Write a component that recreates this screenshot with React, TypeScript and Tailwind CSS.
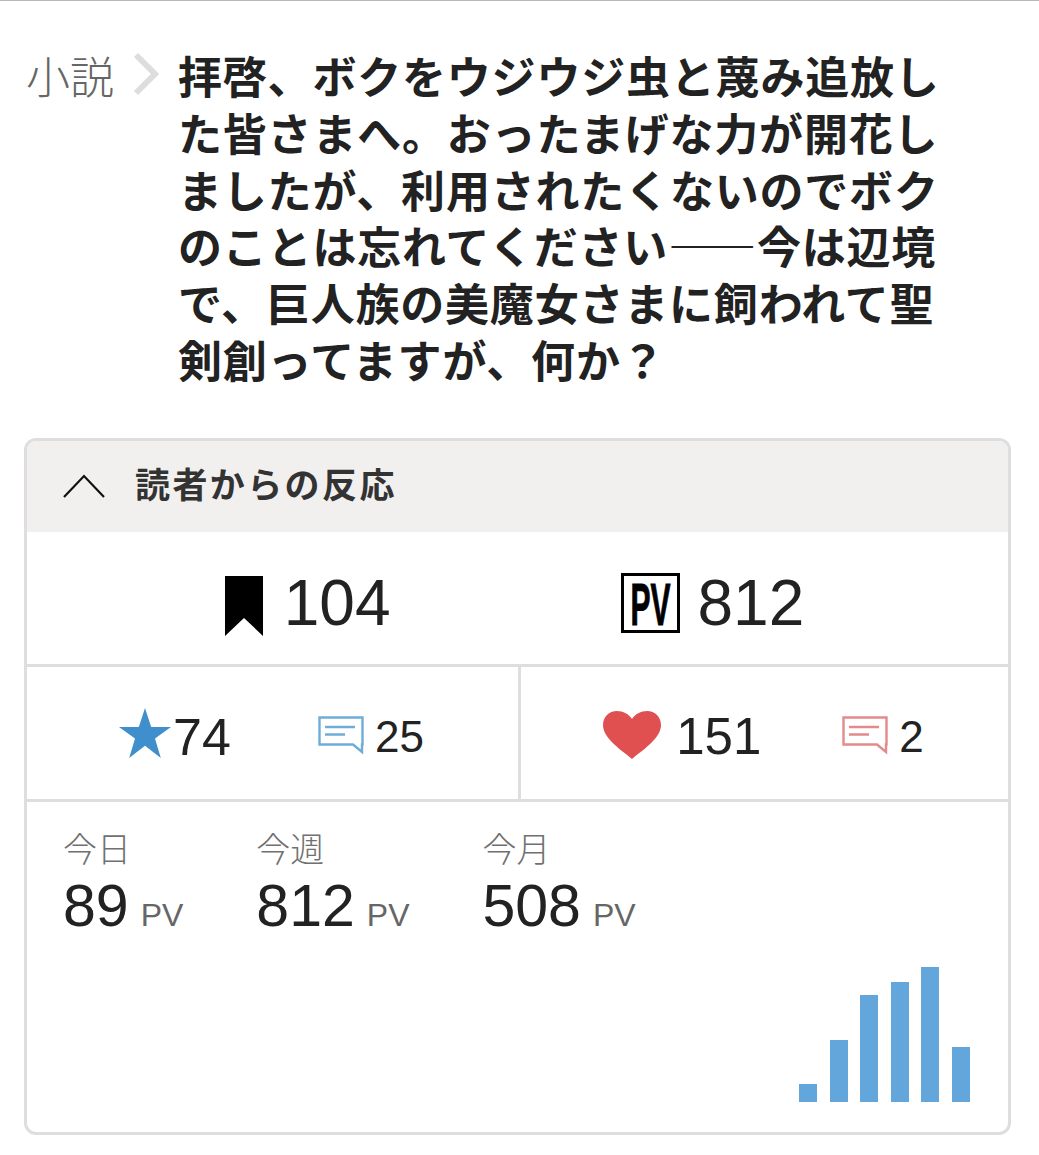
const sans = 'font-["Liberation_Sans","Noto_Sans_CJK_JP",sans-serif]';
const jp = 'font-["Noto_Sans_CJK_JP","Liberation_Sans",sans-serif]';

function CommentIcon({ color }: { color: string }) {
  return (
    <svg width="46" height="39" viewBox="0 0 46 39" fill="none" className="shrink-0 mt-[6px]">
      <path d="M1.5 1.5H44.5V28.5H44V36L35 28.5H1.5Z" stroke={color} strokeWidth="2.4" />
      <path d="M7 11H37M7 18.5H27" stroke={color} strokeWidth="2.4" />
    </svg>
  );
}

function Stat({ label, value }: { label: string; value: string }) {
  return (
    <div>
      <div className={`${jp} text-[34px] leading-[38px] text-[#707070] font-light`}>{label}</div>
      <div className="flex items-baseline mt-[7px]">
        <span className="text-[59px] leading-[64px] text-[#222]">{value}</span>
        <span className="text-[32px] text-[#666] ml-[12px]">PV</span>
      </div>
    </div>
  );
}

const bars = [18, 62, 107, 120, 135, 55];

export default function App() {
  return (
    <div className={`${sans} w-[1039px] h-[1155px] overflow-hidden bg-white border-t border-t-[#b8b8b8]`}>
      <div className="flex pt-[46px] pl-[26px] pr-[90px]">
        <div className={`${jp} flex items-start w-[152px] shrink-0 text-[#666] text-[44px] leading-[57px] font-light`}>
          <span>小説</span>
          <svg width="26" height="44" viewBox="0 0 26 44" fill="none" className="ml-[19px] mt-[5px]">
            <path d="M3 3L22 22L3 41" stroke="#dddddd" strokeWidth="6" />
          </svg>
        </div>
        <h1 className={`${jp} flex-1 text-[44px] leading-[56.8px] tracking-[0.8px] font-bold text-[#222] break-all`}>
          拝啓、ボクをウジウジ虫と蔑み追放した皆さまへ。おったまげな力が開花しましたが、利用されたくないのでボクのことは忘れてください――今は辺境で、巨人族の美魔女さまに飼われて聖剣創ってますが、何か？
        </h1>
      </div>

      <section className="ml-[24px] mt-[50px] w-[987px] h-[697px] border-[3px] border-[#dedede] rounded-[12px] overflow-hidden flex flex-col">
        <header className="h-[91px] shrink-0 bg-[#f1f0ef] flex items-center pl-[36px] pb-[6px]">
          <svg width="42" height="24" viewBox="0 0 42 24" fill="none" className="shrink-0 mt-[6px]">
            <path d="M1 23L21 2L41 23" stroke="#111" strokeWidth="2.2" />
          </svg>
          <h2 className={`${jp} ml-[30px] text-[35px] leading-[40px] tracking-[2.4px] font-semibold text-[#333]`}>読者からの反応</h2>
        </header>

        <div className="h-[132px] shrink-0 flex items-center justify-center gap-[230px] pt-[11px] pr-[6px]">
          <div className="flex items-center">
            <svg width="38" height="60" viewBox="0 0 38 60" className="shrink-0 mt-[5px]">
              <path d="M0 0H38V60L19 42L0 60Z" fill="#000" />
            </svg>
            <span className="ml-[21px] text-[64px] leading-none text-[#222]">104</span>
          </div>
          <div className="flex items-center">
            <svg width="59" height="60" viewBox="0 0 59 60" className="shrink-0 overflow-visible">
              <rect x="1.5" y="1.5" width="56" height="57" fill="none" stroke="#000" strokeWidth="3" />
              <text transform="translate(29.5 52) scale(0.5 1)" textAnchor="middle" fontSize="60" fontWeight="700" fontFamily="Liberation Sans" fill="#000" stroke="#000" strokeWidth="1">PV</text>
            </svg>
            <span className="ml-[18px] text-[64px] leading-none text-[#222]">812</span>
          </div>
        </div>

        <div className="h-[138px] shrink-0 grid grid-cols-[494px_1fr] border-y-[3px] border-[#dedede]">
          <div className="flex items-center justify-center border-r-[3px] border-[#dedede] pr-[2px]">
            <svg width="52" height="50" viewBox="0 0 52 50" className="shrink-0 mr-[2px]">
              <path d="M26 0L32.2 18.9H52L36 30.5L41.8 50L26 37.8L10.2 50L16 30.5L0 18.9H19.8Z" fill="#408fcd" />
            </svg>
            <span className="text-[52px] leading-none text-[#222] mr-[87px] mt-[8px]">74</span>
            <CommentIcon color="#6fadd9" />
            <span className="ml-[11px] text-[44px] leading-none text-[#222] mt-[8px]">25</span>
          </div>
          <div className="flex items-center justify-center pr-[2px]">
            <svg width="58" height="48" viewBox="0 0 58 48" className="shrink-0 mt-[4px]">
              <path d="M29 48C20 40 0 28 0 14C0 6 6 0 14 0C20 0 26 3 29 8C32 3 38 0 44 0C52 0 58 6 58 14C58 28 38 40 29 48Z" fill="#e05050" />
            </svg>
            <span className="ml-[15px] text-[51px] leading-none text-[#222] mr-[81px] mt-[8px]">151</span>
            <CommentIcon color="#e58a8a" />
            <span className="ml-[11px] text-[44px] leading-none text-[#222] mt-[8px]">2</span>
          </div>
        </div>

        <div className="flex-1 min-h-0 flex flex-col justify-between pt-[27px] pb-[30px] pl-[36px] pr-[38px]">
          <div className="flex gap-[73px]">
            <Stat label="今日" value="89" />
            <Stat label="今週" value="812" />
            <Stat label="今月" value="508" />
          </div>
          <div className="flex justify-end items-end gap-[12.6px]">
            {bars.map((h, i) => (
              <div key={i} className="w-[18px] bg-[#62a6dc]" style={{ height: h }} />
            ))}
          </div>
        </div>
      </section>
    </div>
  );
}
